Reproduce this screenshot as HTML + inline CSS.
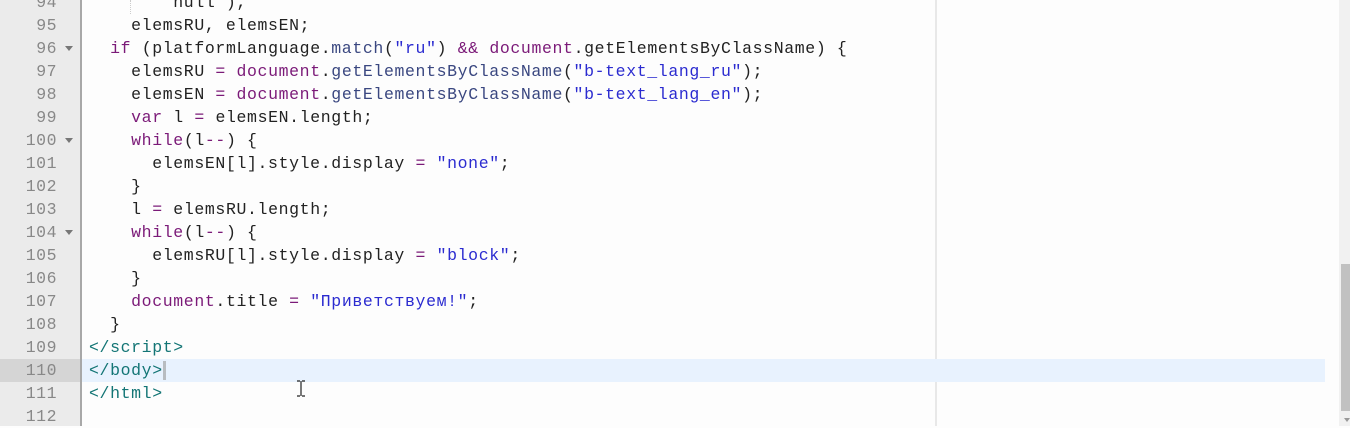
<!DOCTYPE html>
<html><head><meta charset="utf-8"><style>
body{margin:0;width:1350px;height:426px;overflow:hidden;background:#fdfdfd;position:relative;font-family:"Liberation Mono","DejaVu Sans Mono",monospace;font-size:16.5px;letter-spacing:0.63px}
.g{position:absolute;left:0;top:0;width:80px;height:426px;background:#ebebeb;border-right:2px solid #a8a8a8}
.l{position:absolute;left:89px;height:23px;line-height:23px;white-space:pre;color:#222}
.n{position:absolute;left:0;width:57px;text-align:right;height:23px;line-height:23px;color:#888;letter-spacing:0.5px}
.f{position:absolute;left:65px;width:0;height:0;border-left:4px solid transparent;border-right:4px solid transparent;border-top:5px solid #777}
.k{color:#7b1a78}.s{color:#2b2bd0}.t{color:#137575}.m{color:#3a4780}
</style></head><body>
<div style="position:absolute;left:935px;top:0;width:2px;height:426px;background:#e8e8e8"></div>
<div style="position:absolute;left:82px;top:359px;width:1243px;height:23px;background:#e8f2fe"></div>
<div class="g"></div>
<div style="position:absolute;left:0;top:359px;width:80px;height:23px;background:#d5d5d5"></div>
<div style="position:absolute;left:1339px;top:0;width:11px;height:426px;background:#f1f1f1"></div>
<div style="position:absolute;left:1341px;top:264px;width:9px;height:147px;background:#c1c1c1"></div>
<div style="position:absolute;left:1344px;top:418px;border-left:3px solid transparent;border-right:3px solid transparent;border-top:4px solid #999"></div>
<div style="position:absolute;left:130px;top:0;width:0;height:14px;border-left:1px dotted #ccc"></div>
<div style="position:absolute;left:163px;top:361px;width:3px;height:19px;background:#b8bcc0"></div>
<svg style="position:absolute;left:296px;top:380px" width="10" height="17"><path d="M1 1h3M6 1h3M5 1v15M1 16h3M6 16h3" stroke="#222" stroke-width="1.2" fill="none"/></svg>

<div class="n" style="top:-9px">94</div><div class="l" style="top:-9px">        null ),</div>
<div class="n" style="top:14px">95</div><div class="l" style="top:14px">    elemsRU, elemsEN;</div>
<div class="n" style="top:37px">96</div><div class="f" style="top:46px"></div><div class="l" style="top:37px">  <span class="k">if</span> (platformLanguage.<span class="m">match</span>(<span class="s">"ru"</span>) <span class="k">&amp;&amp;</span> <span class="k">document</span>.getElementsByClassName) {</div>
<div class="n" style="top:60px">97</div><div class="l" style="top:60px">    elemsRU <span class="k">=</span> <span class="k">document</span>.<span class="m">getElementsByClassName</span>(<span class="s">"b-text_lang_ru"</span>);</div>
<div class="n" style="top:83px">98</div><div class="l" style="top:83px">    elemsEN <span class="k">=</span> <span class="k">document</span>.<span class="m">getElementsByClassName</span>(<span class="s">"b-text_lang_en"</span>);</div>
<div class="n" style="top:106px">99</div><div class="l" style="top:106px">    <span class="k">var</span> l <span class="k">=</span> elemsEN.length;</div>
<div class="n" style="top:129px">100</div><div class="f" style="top:138px"></div><div class="l" style="top:129px">    <span class="k">while</span>(l<span class="k">--</span>) {</div>
<div class="n" style="top:152px">101</div><div class="l" style="top:152px">      elemsEN[l].style.display <span class="k">=</span> <span class="s">"none"</span>;</div>
<div class="n" style="top:175px">102</div><div class="l" style="top:175px">    }</div>
<div class="n" style="top:198px">103</div><div class="l" style="top:198px">    l <span class="k">=</span> elemsRU.length;</div>
<div class="n" style="top:221px">104</div><div class="f" style="top:230px"></div><div class="l" style="top:221px">    <span class="k">while</span>(l<span class="k">--</span>) {</div>
<div class="n" style="top:244px">105</div><div class="l" style="top:244px">      elemsRU[l].style.display <span class="k">=</span> <span class="s">"block"</span>;</div>
<div class="n" style="top:267px">106</div><div class="l" style="top:267px">    }</div>
<div class="n" style="top:290px">107</div><div class="l" style="top:290px">    <span class="k">document</span>.title <span class="k">=</span> <span class="s">"Приветствуем!"</span>;</div>
<div class="n" style="top:313px">108</div><div class="l" style="top:313px">  }</div>
<div class="n" style="top:336px">109</div><div class="l" style="top:336px"><span class="t">&lt;/script&gt;</span></div>
<div class="n" style="top:359px">110</div><div class="l" style="top:359px"><span class="t">&lt;/body&gt;</span></div>
<div class="n" style="top:382px">111</div><div class="l" style="top:382px"><span class="t">&lt;/html&gt;</span></div>
<div class="n" style="top:405px">112</div>
</body></html>
